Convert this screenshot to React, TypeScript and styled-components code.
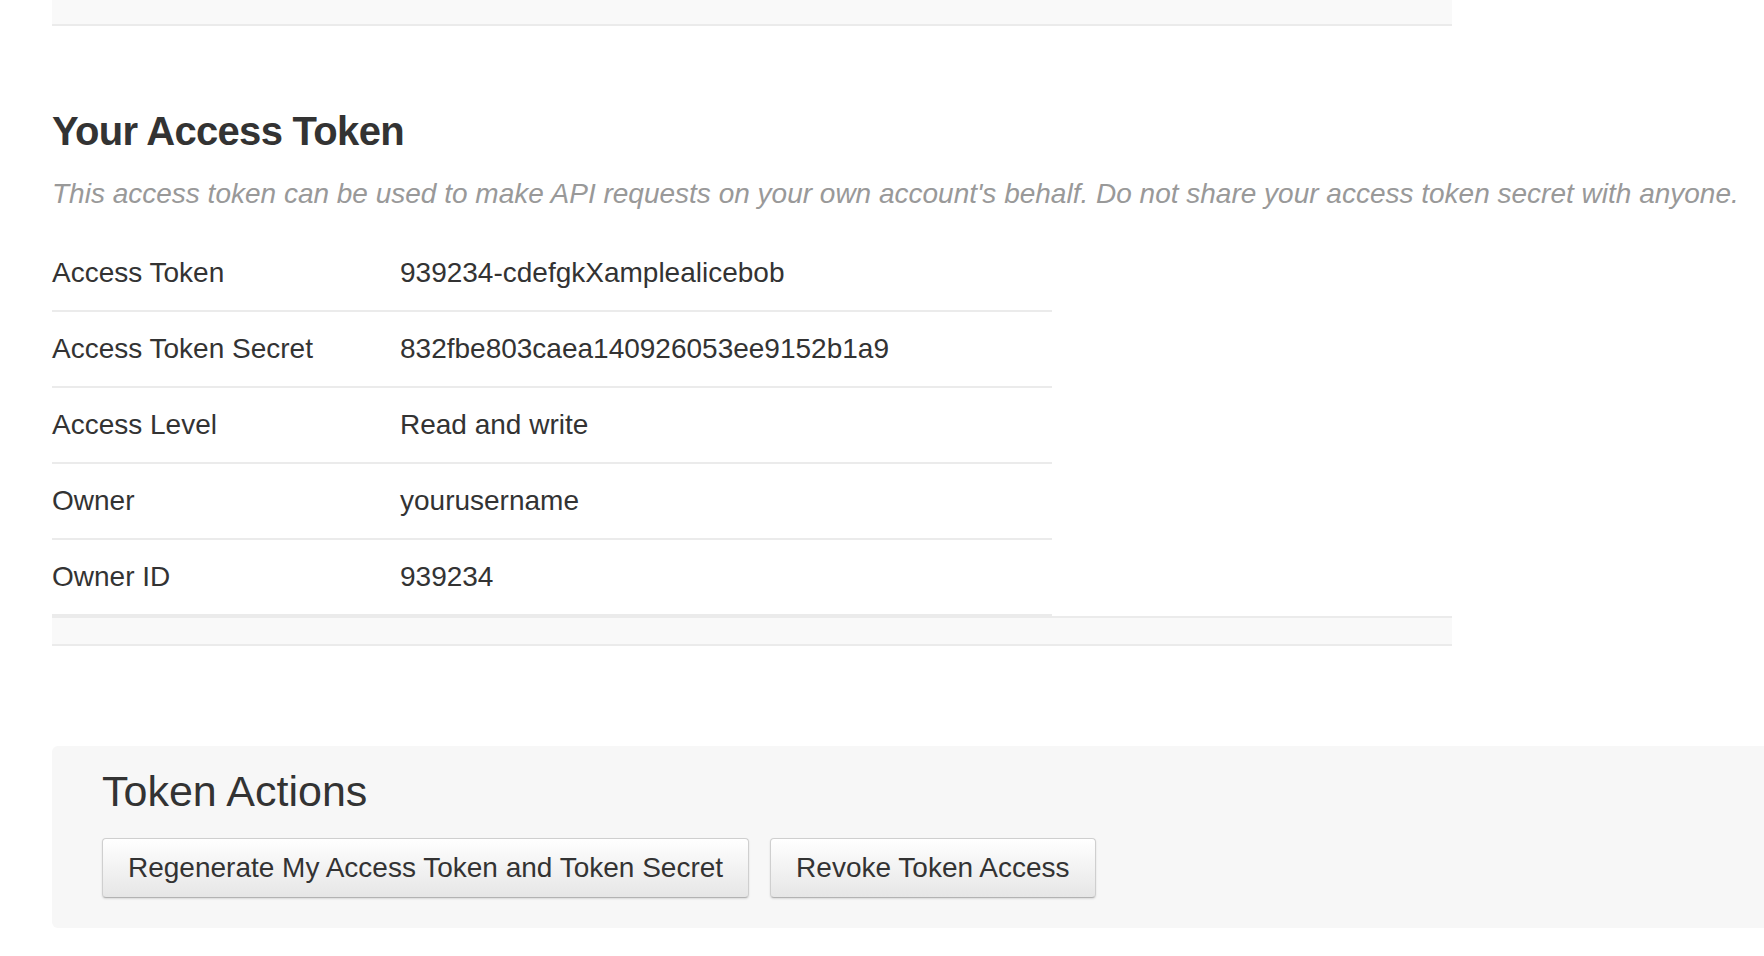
import React from 'react';
import styled, { createGlobalStyle } from 'styled-components';

const GlobalStyle = createGlobalStyle`
  html, body {
    margin: 0;
    padding: 0;
    background: #fff;
    overflow-x: hidden;
  }
  body {
    font-family: "Liberation Sans", Arial, sans-serif;
    color: #333;
  }
`;

const tokenRows = [
  { label: 'Access Token', value: '939234-cdefgkXamplealicebob' },
  { label: 'Access Token Secret', value: '832fbe803caea140926053ee9152b1a9' },
  { label: 'Access Level', value: 'Read and write' },
  { label: 'Owner', value: 'yourusername' },
  { label: 'Owner ID', value: '939234' },
];

const App: React.FC = () => {
  return (
    <>
      <GlobalStyle />
      <StyledPage>
        <StyledBand $top />
        <StyledTitle>Your Access Token</StyledTitle>
        <StyledHint>
          This access token can be used to make API requests on your own account's behalf. Do not
          share your access token secret with anyone.
        </StyledHint>
        <StyledTable>
          {tokenRows.map((row) => (
            <StyledRow key={row.label}>
              <StyledLabel>{row.label}</StyledLabel>
              <StyledValue>{row.value}</StyledValue>
            </StyledRow>
          ))}
        </StyledTable>
        <StyledBand />
        <StyledActions>
          <StyledActionsTitle>Token Actions</StyledActionsTitle>
          <StyledButtons>
            <StyledButton type="button">Regenerate My Access Token and Token Secret</StyledButton>
            <StyledButton type="button">Revoke Token Access</StyledButton>
          </StyledButtons>
        </StyledActions>
      </StyledPage>
    </>
  );
};

const StyledPage = styled.div`
  padding: 0 0 28px 52px;
  display: flex;
  flex-direction: column;
  align-items: flex-start;
`;

const StyledBand = styled.div<{ $top?: boolean }>`
  width: 1400px;
  height: ${(props) => (props.$top ? '24px' : '26px')};
  background: #f9f9f9;
  border-top: ${(props) => (props.$top ? 'none' : '2px solid #ebebeb')};
  border-bottom: 2px solid #ebebeb;
`;

const StyledTitle = styled.h1`
  margin: 81px 0 0;
  font-family: "Liberation Sans", Arial, sans-serif;
  font-weight: 700;
  font-size: 40px;
  line-height: 48px;
  letter-spacing: -0.7px;
  color: #333;
`;

const StyledHint = styled.p`
  margin: 21px 0 0;
  font-style: italic;
  font-size: 28px;
  line-height: 36px;
  color: #999;
  white-space: nowrap;
`;

const StyledTable = styled.div`
  margin-top: 24px;
  width: 1000px;
  display: flex;
  flex-direction: column;
`;

const StyledRow = styled.div`
  display: grid;
  grid-template-columns: 348px 1fr;
  padding: 22px 0;
  border-bottom: 2px solid #ebebeb;
  font-size: 28px;
  line-height: 30px;
  color: #333;
`;

const StyledLabel = styled.div``;

const StyledValue = styled.div`
  font-size: 28px;
`;

const StyledActions = styled.div`
  margin-top: 100px;
  width: 1760px;
  box-sizing: border-box;
  padding: 20px 0 30px 50px;
  background: #f7f7f7;
  border-radius: 6px;
`;

const StyledActionsTitle = styled.h2`
  margin: 0;
  font-weight: 400;
  font-size: 43px;
  line-height: 50px;
  color: #333;
`;

const StyledButtons = styled.div`
  margin-top: 22px;
  display: flex;
  gap: 21px;
`;

const StyledButton = styled.button`
  height: 60px;
  padding: 0 25px;
  font-family: "Liberation Sans", Arial, sans-serif;
  font-size: 28px;
  color: #333;
  background: linear-gradient(to bottom, #ffffff 0%, #e6e6e6 100%);
  border: 1px solid #cfcfcf;
  border-bottom-color: #b3b3b3;
  border-radius: 4px;
  box-shadow: 0 1px 2px rgba(0, 0, 0, 0.12), inset 0 1px 0 rgba(255, 255, 255, 0.6);
  cursor: pointer;
`;

export default App;
